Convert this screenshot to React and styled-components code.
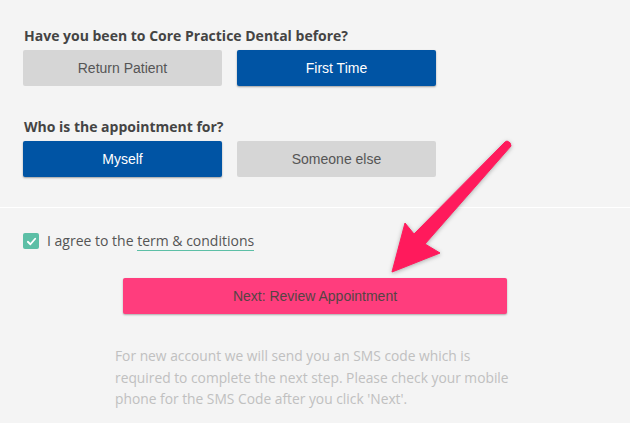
import React, { useState } from 'react';
import styled, { createGlobalStyle } from 'styled-components';

const GlobalStyle = createGlobalStyle`
  html, body {
    margin: 0;
    padding: 0;
    background: #f4f4f4;
  }
  * { box-sizing: border-box; }
`;

const Page = styled.div`
  position: relative;
  width: 630px;
  height: 423px;
  overflow: hidden;
  background: #f4f4f4;
  font-family: "Open Sans", "Liberation Sans", sans-serif;
`;

const Questions = styled.section`
  padding: 27px 23px 30px;
  border-bottom: 1px solid #ffffff;
`;

const Question = styled.div`
  & + & { margin-top: 32px; }
`;

const Heading = styled.h3`
  margin: 0 0 5px 1px;
  font-size: 14px;
  line-height: 18px;
  font-weight: 700;
  color: #444;
`;

const Choices = styled.div`
  display: flex;
  gap: 15px;
`;

const Choice = styled.button`
  width: 199px;
  height: 36px;
  border: none;
  border-radius: 2px;
  font-family: "Liberation Sans", Arial, sans-serif;
  font-size: 14px;
  cursor: pointer;
  background: ${p => (p.$active ? '#0054a4' : '#d6d6d6')};
  color: ${p => (p.$active ? '#fff' : '#555')};
  box-shadow: ${p => (p.$active ? '0 1px 2px rgba(0,0,0,0.35)' : 'none')};
`;

const Footer = styled.section`
  padding: 23px 23px 0;
`;

const Agree = styled.label`
  display: flex;
  align-items: center;
  gap: 8px;
  font-size: 14px;
  line-height: 20px;
  color: #555;
`;

const Box = styled.span`
  width: 16px;
  height: 16px;
  border-radius: 2px;
  background: #5cbfa6;
  display: flex;
  align-items: center;
  justify-content: center;
`;

const Terms = styled.span`
  border-bottom: 1px solid #5cbfa6;
  line-height: 18px;
`;

const NextButton = styled.button`
  display: block;
  margin: 27px auto 0;
  width: 384px;
  height: 36px;
  border: none;
  border-radius: 2px;
  background: #ff3d7d;
  color: #544;
  font-family: "Liberation Sans", Arial, sans-serif;
  font-size: 14px;
  box-shadow: 0 1px 2px rgba(0,0,0,0.3);
  cursor: pointer;
`;

const Note = styled.p`
  width: 412px;
  margin: 31px 0 0 92px;
  font-size: 13.8px;
  line-height: 21.5px;
  color: #c0c0c0;
`;

const Arrow = styled.svg`
  position: absolute;
  left: 0;
  top: 0;
  pointer-events: none;
  filter: drop-shadow(0 1px 2px rgba(0,0,0,0.3));
`;

function Check() {
  return (
    <svg width="11" height="11" viewBox="0 0 12 12">
      <path d="M2 6.3 L4.8 9 L10 3" fill="none" stroke="#fff" strokeWidth="2" strokeLinecap="round" strokeLinejoin="round" />
    </svg>
  );
}

export default function App() {
  const [visit, setVisit] = useState('first');
  const [who, setWho] = useState('me');

  return (
    <Page>
      <GlobalStyle />
      <Questions>
        <Question>
          <Heading>Have you been to Core Practice Dental before?</Heading>
          <Choices>
            <Choice $active={visit === 'return'} onClick={() => setVisit('return')}>Return Patient</Choice>
            <Choice $active={visit === 'first'} onClick={() => setVisit('first')}>First Time</Choice>
          </Choices>
        </Question>
        <Question>
          <Heading>Who is the appointment for?</Heading>
          <Choices>
            <Choice $active={who === 'me'} onClick={() => setWho('me')}>Myself</Choice>
            <Choice $active={who === 'else'} onClick={() => setWho('else')}>Someone else</Choice>
          </Choices>
        </Question>
      </Questions>

      <Footer>
        <Agree>
          <Box><Check /></Box>
          <span>I agree to the <Terms>term &amp; conditions</Terms></span>
        </Agree>
        <NextButton>Next: Review Appointment</NextButton>
        <Note>
          For new account we will send you an SMS code which is required to complete the next step. Please check your mobile phone for the SMS Code after you click 'Next'.
        </Note>
      </Footer>

      {/* annotation arrow */}
      <Arrow width="630" height="423" viewBox="0 0 630 423">
        <path
          d="M507 141 Q511 142 511 146 L425 244 L440 253 L392 272 L405 223 L414 234 L505 142 Z"
          fill="#ff1a5c"
          stroke="#ff1a5c"
          strokeWidth="1"
          strokeLinejoin="round"
        />
      </Arrow>
    </Page>
  );
}
